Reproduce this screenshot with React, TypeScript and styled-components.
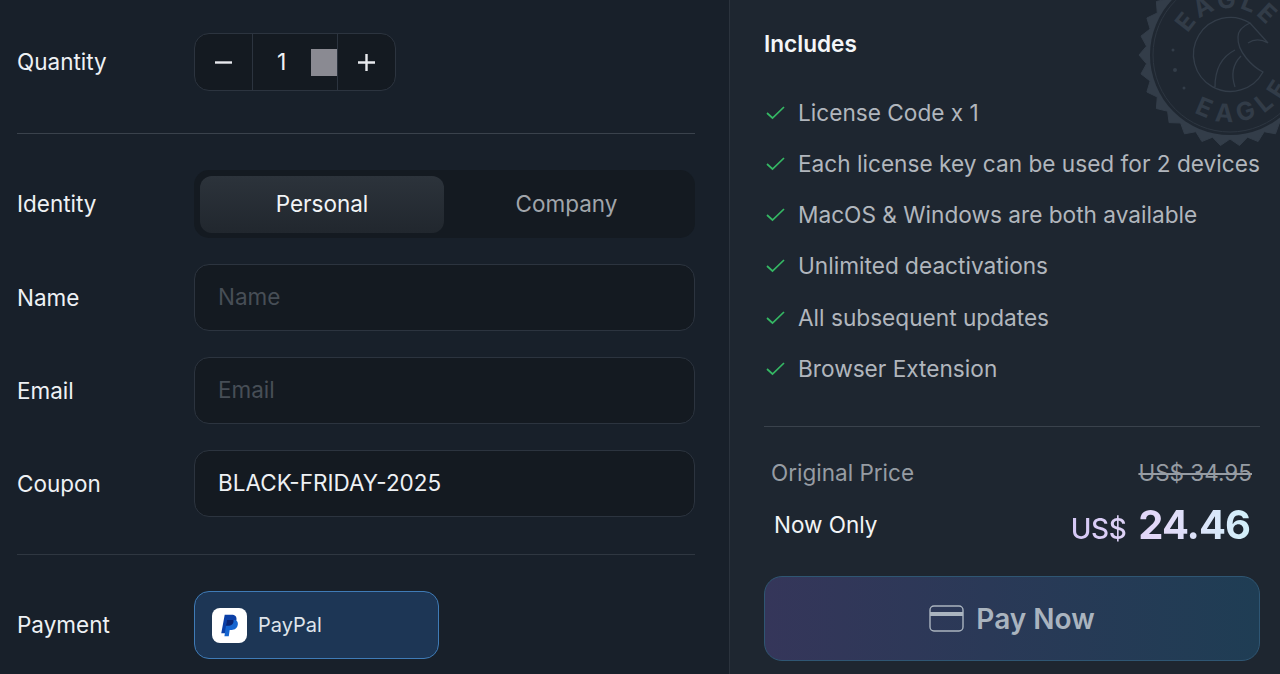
import React from "react";
import styled, { createGlobalStyle } from "styled-components";

const Global = createGlobalStyle`
  html, body { margin: 0; padding: 0; background: #18202a; overflow: hidden; }
  * { box-sizing: border-box; }
  body { font-family: Inter, "Noto Sans", sans-serif; }
`;

const Page = styled.div`
  display: grid;
  grid-template-columns: 730px 550px;
  width: 1280px;
  height: 674px;
  overflow: hidden;
`;

const LeftPanel = styled.section`
  background: #18202a;
  border-right: 1px solid #2b333d;
  padding: 33px 34px 0 17px;
  display: flex;
  flex-direction: column;
`;

const Row = styled.div<{ $mt?: number }>`
  display: grid;
  grid-template-columns: 177px 1fr;
  align-items: center;
  margin-top: ${(p) => p.$mt ?? 0}px;
`;

const Label = styled.div`
  color: #eef1f4;
  font-size: 22.5px;
  line-height: 30px;
  font-weight: 400;
`;

const Divider = styled.hr<{ $mt: number; $color?: string }>`
  border: 0;
  height: 1px;
  width: 100%;
  margin: ${(p) => p.$mt}px 0 0;
  background: ${(p) => p.$color ?? "#3a424c"};
`;

const Stepper = styled.div`
  position: relative;
  display: grid;
  grid-template-columns: 58px 84px 58px;
  width: 202px;
  height: 58px;
  background: #141a21;
  border: 1px solid #2c343f;
  border-radius: 15px;
`;

const StepButton = styled.div<{ $right?: boolean }>`
  display: flex;
  align-items: center;
  justify-content: center;
  color: #e8eaee;
  ${(p) => (p.$right ? "border-left: 1px solid #2c343f;" : "border-right: 1px solid #2c343f;")}
`;

const StepValue = styled.div`
  position: relative;
  display: flex;
  align-items: center;
  color: #eef1f4;
  font-size: 23px;
  padding-left: 24px;
`;

const SpinnerBlock = styled.span`
  position: absolute;
  right: 0;
  top: 15px;
  width: 26px;
  height: 27px;
  background: #8a8a92;
`;

const Toggle = styled.div`
  display: grid;
  grid-template-columns: 244px 1fr;
  height: 68px;
  padding: 6px;
  background: #141a21;
  border-radius: 15px;
`;

const ToggleItem = styled.div<{ $active?: boolean }>`
  display: flex;
  align-items: center;
  justify-content: center;
  font-size: 22.5px;
  height: 57px;
  padding-bottom: 2px;
  border-radius: 12px;
  color: ${(p) => (p.$active ? "#f2f4f6" : "#a0a5ab")};
  background: ${(p) => (p.$active ? "linear-gradient(180deg, #2c333b 0%, #21272e 100%)" : "transparent")};
`;

const Field = styled.div<{ $filled?: boolean }>`
  display: flex;
  align-items: center;
  height: 67px;
  padding: 0 23px 2px;
  background: #141a21;
  border: 1px solid #2c343f;
  border-radius: 15px;
  font-size: 22.5px;
  color: ${(p) => (p.$filled ? "#eef1f4" : "#474e56")};
`;

const PayCard = styled.div`
  display: flex;
  align-items: center;
  gap: 11px;
  width: 245px;
  height: 68px;
  padding: 0 17px;
  background: #1d3655;
  border: 1px solid #3f7bb6;
  border-radius: 15px;
  color: #dfe4ea;
  font-size: 20px;
`;

const PayLogo = styled.span`
  display: flex;
  align-items: center;
  justify-content: center;
  width: 35px;
  height: 35px;
  border-radius: 8px;
  background: #fff;
`;

const RightPanel = styled.section`
  position: relative;
  background: #1e2630;
  padding: 29px 20px 0 34px;
  display: flex;
  flex-direction: column;
  overflow: hidden;
`;

const Seal = styled.svg`
  position: absolute;
  left: 407px;
  top: -38px;
  width: 186px;
  height: 186px;
`;

const Title = styled.h2`
  position: relative;
  margin: 0;
  color: #f4f6f8;
  font-size: 22.6px;
  line-height: 30px;
  font-weight: 600;
`;

const Features = styled.ul`
  position: relative;
  list-style: none;
  margin: 38px 0 0;
  padding: 0;
  display: flex;
  flex-direction: column;
  gap: 21.3px;
`;

const Feature = styled.li`
  display: flex;
  align-items: center;
  gap: 12px;
  height: 30px;
  color: #b1b6bd;
  font-size: 22.65px;
  white-space: nowrap;
  svg {
    flex-shrink: 0;
    margin-left: 1px;
  }
`;

const PriceRow = styled.div<{ $mt: number; $pl: number; $pr: number }>`
  display: flex;
  align-items: center;
  justify-content: space-between;
  margin-top: ${(p) => p.$mt}px;
  padding: 0 ${(p) => p.$pr}px 0 ${(p) => p.$pl}px;
`;

const MutedLabel = styled.span`
  color: #969ca3;
  font-size: 22.5px;
  line-height: 30px;
`;

const StrikePrice = styled.span`
  color: #969ca3;
  font-size: 22.5px;
  line-height: 30px;
  text-decoration: line-through;
`;

const NowLabel = styled.span`
  color: #f2f4f6;
  font-size: 22.5px;
  line-height: 30px;
`;

const NowPrice = styled.span`
  display: inline-flex;
  align-items: baseline;
  gap: 12px;
  background: linear-gradient(90deg, #d5c8f5 0%, #e3d9f8 50%, #d2f0fa 100%);
  -webkit-background-clip: text;
  background-clip: text;
  color: transparent;
`;

const Currency = styled.span`
  font-size: 28px;
  font-weight: 500;
  letter-spacing: -0.4px;
`;

const Amount = styled.span`
  font-size: 40px;
  line-height: 48px;
  font-weight: 700;
  letter-spacing: -1px;
`;

const PayButton = styled.div`
  display: flex;
  align-items: center;
  justify-content: center;
  gap: 12px;
  height: 85px;
  margin-top: 27px;
  border-radius: 18px;
  border: 1px solid #2f5673;
  background: linear-gradient(90deg, #35365a 0%, #2a3957 45%, #1f3d54 100%);
  color: #aab4bf;
  font-size: 28px;
  font-weight: 600;
`;

const Check = () => (
  <svg width="21" height="21" viewBox="0 0 21 21" fill="none" stroke="#35b864" strokeWidth="1.7">
    <path d="M2 11l5.5 5L19 5" />
  </svg>
);

const features = [
  "License Code x 1",
  "Each license key can be used for 2 devices",
  "MacOS & Windows are both available",
  "Unlimited deactivations",
  "All subsequent updates",
  "Browser Extension",
];

const teeth = Array.from({ length: 30 }, (_, i) => {
  const a0 = (i / 30) * Math.PI * 2;
  const a1 = ((i + 0.5) / 30) * Math.PI * 2;
  return `${(93 + Math.cos(a0) * 91).toFixed(1)},${(93 + Math.sin(a0) * 91).toFixed(1)} ${(93 + Math.cos(a1) * 84).toFixed(1)},${(93 + Math.sin(a1) * 84).toFixed(1)}`;
}).join(" ");

export default function App() {
  return (
    <Page>
      <Global />
      <LeftPanel>
        <Row>
          <Label>Quantity</Label>
          <Stepper>
            <StepButton>
              <svg width="17" height="17" viewBox="0 0 17 17" stroke="currentColor" strokeWidth="2.4">
                <path d="M0 8.5h17" />
              </svg>
            </StepButton>
            <StepValue>
              1
              <SpinnerBlock />
            </StepValue>
            <StepButton $right>
              <svg width="17" height="17" viewBox="0 0 17 17" stroke="currentColor" strokeWidth="2.4">
                <path d="M0 8.5h17M8.5 0v17" />
              </svg>
            </StepButton>
          </Stepper>
        </Row>
        <Divider $mt={42} />
        <Row $mt={36}>
          <Label>Identity</Label>
          <Toggle>
            <ToggleItem $active>Personal</ToggleItem>
            <ToggleItem>Company</ToggleItem>
          </Toggle>
        </Row>
        <Row $mt={26}>
          <Label>Name</Label>
          <Field>Name</Field>
        </Row>
        <Row $mt={26}>
          <Label>Email</Label>
          <Field>Email</Field>
        </Row>
        <Row $mt={26}>
          <Label>Coupon</Label>
          <Field $filled>BLACK-FRIDAY-2025</Field>
        </Row>
        <Divider $mt={37} $color="#2f3741" />
        <Row $mt={36}>
          <Label>Payment</Label>
          <PayCard>
            <PayLogo>
              <svg width="19" height="23" viewBox="0 0 21 24">
                <path fill="#0b3fa6" d="M5.2 0h7.6c3.7 0 6 2 5.4 5.6-.7 4.3-3.4 6.6-7.3 6.6H7.9l-1.4 8.5H1.4z" />
                <path fill="#1565d0" d="M7.5 6h7.5c3 0 5.2 1.4 4.7 5-.6 4.1-3.3 6-6.7 6h-2.3l-1 7H4.9z" />
                <path fill="#0a2472" d="M7.5 6h7.4c.4 2.9-1 6.2-4.9 6.2H6.6z" />
              </svg>
            </PayLogo>
            PayPal
          </PayCard>
        </Row>
      </LeftPanel>
      <RightPanel>
        <Seal viewBox="0 0 186 186" fill="none">
          <defs>
            <path id="sealTop" d="M46 93a47 47 0 0 1 94 0" />
            <path id="sealBottom" d="M26 93a67 67 0 0 0 134 0" />
          </defs>
          <polygon points={teeth} fill="#333d49" stroke="#333d49" strokeLinejoin="round" />
          <circle cx="93" cy="93" r="80" fill="#1f2731" />
          <circle cx="93" cy="93" r="77" stroke="#2d3641" strokeWidth="1" />
          <text fill="#323c48" fontSize="25" fontWeight="700" letterSpacing="3">
            <textPath href="#sealTop" startOffset="15%">EAGLE</textPath>
          </text>
          <text fill="#323c48" fontSize="25" fontWeight="700" letterSpacing="7">
            <textPath href="#sealBottom" startOffset="32%">EAGLE</textPath>
          </text>
          <circle cx="36" cy="88" r="1.5" fill="#333d49" />
          <circle cx="38" cy="108" r="2" fill="#333d49" />
          <circle cx="47" cy="126" r="1.5" fill="#333d49" />
          <path
            stroke="#333d49"
            strokeWidth="1.3"
            d="M113 61A37 37 0 1 0 126 110C116 105 100 90 101 75C101 69 106 64 113 61L131 81C124 77 117 77 111 81M78 125C78 108 84 95 98 88M98 125C94 113 96 102 104 94"
          />
        </Seal>
        <Title>Includes</Title>
        <Features>
          {features.map((f) => (
            <Feature key={f}>
              <Check />
              {f}
            </Feature>
          ))}
        </Features>
        <Divider $mt={43} $color="#3a424c" />
        <PriceRow $mt={31} $pl={7} $pr={8}>
          <MutedLabel>Original Price</MutedLabel>
          <StrikePrice>US$ 34.95</StrikePrice>
        </PriceRow>
        <PriceRow $mt={13} $pl={10} $pr={10}>
          <NowLabel>Now Only</NowLabel>
          <NowPrice>
            <Currency>US$</Currency>
            <Amount>24.46</Amount>
          </NowPrice>
        </PriceRow>
        <PayButton>
          <svg width="35" height="27" viewBox="0 0 35 27" fill="none" stroke="#aab4bf" strokeWidth="1.4">
            <rect x="1" y="1" width="33" height="25" rx="4" />
            <path d="M1 9h33" strokeWidth="4" />
          </svg>
          Pay Now
        </PayButton>
      </RightPanel>
    </Page>
  );
}
